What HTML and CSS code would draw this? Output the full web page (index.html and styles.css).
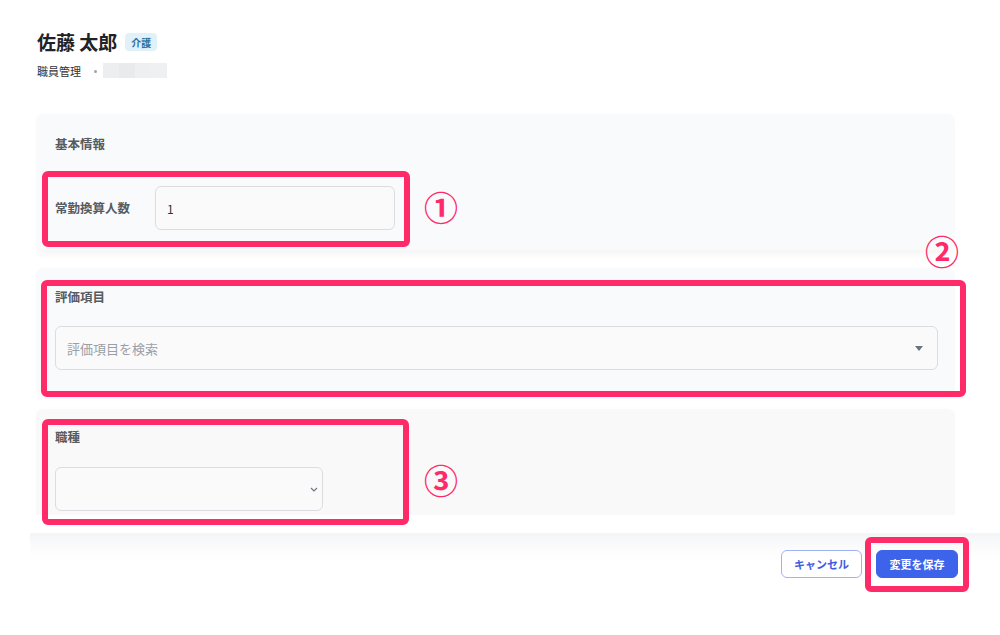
FILE: index.html
```html
<!DOCTYPE html>
<html lang="ja">
<head>
<meta charset="utf-8">
<link rel="stylesheet" href="styles.css">
</head>
<body>
<div class="page">
  <header class="header">
    <div class="title-row">
      <h1 class="title">佐藤 太郎</h1>
      <span class="badge">介護</span>
    </div>
    <div class="crumbs">
      <span class="crumb">職員管理</span>
      <span class="dot"></span>
      <span class="blur"><i></i><i></i><i></i><i></i></span>
    </div>
  </header>

  <div class="scroll">
    <section class="card card-basic">
      <h2 class="card-title">基本情報</h2>
      <div class="field-row">
        <label class="label">常勤換算人数</label>
        <div class="input input-num">1</div>
      </div>
    </section>

    <section class="card card-eval">
      <label class="label">評価項目</label>
      <div class="input input-search">
        <span class="placeholder">評価項目を検索</span>
        <svg class="caret" width="8" height="5" viewBox="0 0 8 5"><path d="M0 0h8L4 5z" fill="#6b7280"/></svg>
      </div>
    </section>

    <section class="card card-job">
      <label class="label">職種</label>
      <div class="input input-select">
        <svg class="chev" width="8" height="5" viewBox="0 0 8 5"><path d="M1 1l3 3 3-3" fill="none" stroke="#6b7280" stroke-width="1.1"/></svg>
      </div>
    </section>
  </div>

  <footer class="footer">
    <button class="btn btn-ghost">キャンセル</button>
    <button class="btn btn-primary">変更を保存</button>
  </footer>

  <div class="mark mark-1"></div>
  <div class="mark mark-2"></div>
  <div class="mark mark-3"></div>
  <div class="mark mark-4"></div>
  <span class="num num-1">①</span>
  <span class="num num-2">②</span>
  <span class="num num-3">③</span>
</div>
</body>
</html>
```

FILE: styles.css
```css
* { box-sizing: border-box; }
html, body { margin: 0; padding: 0; background: #fff; }
body {
  font-family: "Noto Sans CJK JP", "Noto Sans", sans-serif;
  color: #222;
  width: 1000px;
  height: 635px;
  overflow: hidden;
}
.page {
  position: relative;
  padding: 30px 45px 0 36px;
}
.header { padding-left: 1px; }
.title-row { display: flex; align-items: center; gap: 8px; height: 24px; }
.title { margin: 0; font-size: 19px; font-weight: 700; line-height: 24px; color: #1f2328; }
.badge {
  display: inline-flex; align-items: center; justify-content: center;
  height: 18px; padding: 0 6px;
  background: #e0f1fa; color: #2f6f99; border-radius: 4px;
  font-size: 10px; font-weight: 700;
}
.crumbs { display: flex; align-items: center; height: 16px; margin-top: 9px; }
.crumb { font-size: 11px; color: #333; line-height: 16px; }
.dot { width: 3px; height: 3px; border-radius: 50%; background: #a0a4aa; margin: 1px 6px 0 13px; }
.blur { display: flex; height: 15px; margin-top: -1px; }
.blur i { display: block; width: 16px; height: 15px; background: #eceef0; }
.blur i:nth-child(2) { background: #e8eaec; }
.blur i:nth-child(3) { background: #edeff1; }
.blur i:nth-child(4) { background: #eef0f2; }

.scroll {
  margin-top: 35px;
  height: 401px;
  overflow: hidden;
  display: flex; flex-direction: column; gap: 18px;
}
.card {
  background: #f9fafb;
  border-radius: 8px;
  box-shadow: 0 4px 8px rgba(30, 40, 60, 0.05);
  padding: 20px 17px 20px 19px;
  flex-shrink: 0;
}
.card-title { margin: 0; font-size: 12.5px; font-weight: 700; color: #555b61; line-height: 20px; }
.label { display: block; font-size: 12.5px; font-weight: 700; color: #555b61; line-height: 20px; }
.field-row { display: flex; align-items: center; margin-top: 32px; }
.field-row .label { width: 100px; }
.input {
  background: #fafafa;
  border: 1px solid #dcdde0;
  border-radius: 6px;
  height: 44px;
  display: flex; align-items: center;
}
.input-num { width: 240px; padding-left: 11px; font-size: 12px; color: #333; }
.card-basic { height: 136px; padding-top: 20px; }
.card-eval { height: 123px; padding-top: 19px; }
.input-search { margin-top: 19px; padding: 0 14px 0 11px; justify-content: space-between; }
.placeholder { font-size: 13px; color: #9a9fa6; }
.card-job { height: 140px; padding-top: 18px; background: #f9f9f9; }
.input-select { margin-top: 20px; width: 268px; justify-content: flex-end; padding-right: 4px; }

.footer {
  margin: 18px -45px 0 -6px;
  height: 102px;
  background: linear-gradient(to bottom, #f4f5f7 0, #fbfbfc 14px, #ffffff 28px);
  display: flex; justify-content: flex-end; align-items: flex-start;
  gap: 14px;
  padding: 17px 42px 0 0;
}
.btn {
  height: 28px; border-radius: 6px;
  font-family: inherit; font-size: 11px; font-weight: 700;
  padding: 0; white-space: nowrap; cursor: pointer;
}
.btn-ghost { width: 81px; background: #fff; border: 1px solid #9fb3f4; color: #3e5ce0; }
.btn-primary { width: 82px; background: #3c63ea; border: 1px solid #3c63ea; color: #fff; }

.mark {
  position: absolute;
  border: 6px solid #ff2b69;
  border-radius: 6px;
  pointer-events: none;
}
.mark-1 { left: 42px; top: 171px; width: 368px; height: 76px; }
.mark-2 { left: 41px; top: 280px; width: 925px; height: 117px; }
.mark-3 { left: 42px; top: 419px; width: 367px; height: 106px; }
.mark-4 { left: 865px; top: 537px; width: 104px; height: 55px; }
.num {
  position: absolute;
  font-size: 34px; line-height: 34px; font-weight: 700;
  color: #ff2b69;
  font-family: "Noto Sans CJK JP", sans-serif;
}
.num-1 { left: 424px; top: 190px; }
.num-2 { left: 925px; top: 234px; }
.num-3 { left: 424px; top: 463px; }
```
